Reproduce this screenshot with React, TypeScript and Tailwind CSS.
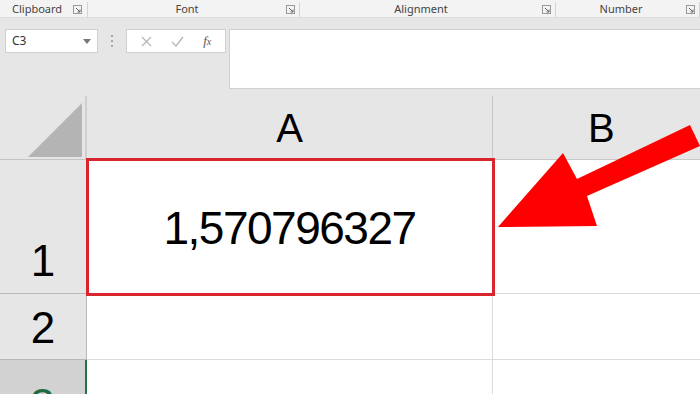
import React from "react";

function Launcher() {
  return (
    <svg width="9" height="9" viewBox="0 0 9 9" className="shrink-0">
      <rect x="0.5" y="0.5" width="8" height="8" fill="none" stroke="#9a9a9a" strokeWidth="1" />
      <path d="M3 3 L7 7 M7 4.5 L7 7 L4.5 7" stroke="#666" strokeWidth="1" fill="none" />
    </svg>
  );
}

function RibbonGroup({ label, width, pad }: { label: string; width: string; pad?: string }) {
  return (
    <div className={`${width} h-full flex items-center border-r border-[#d4d4d4] pr-[4px] ${pad ?? ""}`}>
      <div className="flex-1 text-center text-[11px] text-[#444]">{label}</div>
      <Launcher />
    </div>
  );
}

export default function App() {
  const font = { fontFamily: '"Noto Sans", "Open Sans", sans-serif' };
  return (
    <div className="w-[700px] h-[394px] overflow-hidden bg-[#e6e6e6] flex flex-col relative" style={font}>
      {/* ribbon group labels */}
      <div className="h-[18px] shrink-0 bg-[#f3f3f3] border-b border-[#dedede] flex items-stretch pt-[2px]">
        <div className="w-[88px] h-full flex items-center border-r border-[#d4d4d4] pr-[5px] pl-[12px]">
          <div className="flex-1 text-[11px] text-[#444]">Clipboard</div>
          <Launcher />
        </div>
        <RibbonGroup label="Font" width="w-[212px]" />
        <RibbonGroup label="Alignment" width="w-[256px]" />
        <RibbonGroup label="Number" width="w-[144px]" />
      </div>

      {/* formula bar area */}
      <div className="h-[78px] shrink-0 flex items-start pt-[11px] pl-[5px]">
        <div className="w-[93px] h-[24px] bg-white border border-[#d0d0d0] flex items-center pl-[6px] pr-[6px]">
          <span className="flex-1 text-[12px] text-[#333]">C3</span>
          <svg width="8" height="5" viewBox="0 0 8 5"><path d="M0 0 L8 0 L4 5 Z" fill="#777" /></svg>
        </div>
        <div className="w-[28px] h-[24px] flex flex-col items-center justify-center gap-[3px]">
          <div className="w-[2px] h-[2px] bg-[#a8a8a8]" />
          <div className="w-[2px] h-[2px] bg-[#a8a8a8]" />
          <div className="w-[2px] h-[2px] bg-[#a8a8a8]" />
        </div>
        <div className="w-[100px] h-[24px] bg-white border border-[#d0d0d0] flex items-center justify-around px-[4px]">
          <svg width="11" height="11" viewBox="0 0 11 11"><path d="M1 1 L10 10 M10 1 L1 10" stroke="#b8b8b8" strokeWidth="1.3" /></svg>
          <svg width="13" height="11" viewBox="0 0 13 11"><path d="M1 6 L5 10 L12 1" stroke="#b8b8b8" strokeWidth="1.4" fill="none" /></svg>
          <span className="text-[13px] italic text-[#555]" style={{ fontFamily: '"Liberation Serif", serif' }}>
            f<span className="text-[10px]">x</span>
          </span>
        </div>
        <div className="ml-[3px] flex-1 h-[60px] bg-white border border-[#d0d0d0] border-r-0" />
      </div>

      {/* grid */}
      <div className="flex-1 min-h-0 overflow-hidden grid grid-cols-[87px_406px_1fr] grid-rows-[64px_134px_66px_1fr]">
        {/* corner */}
        <div className="border-r-2 border-b border-[#d0d0d0] border-b-[#c4c4c4] relative">
          <svg className="absolute right-[2px] bottom-[1px]" width="56" height="56" viewBox="0 0 56 56">
            <polygon points="1,55 55,1 55,55" fill="#b4b4b4" />
          </svg>
        </div>
        <div className="border-r border-b border-[#c8c8c8] flex items-center justify-center text-[40px] text-black" style={{ fontFamily: '"Liberation Sans", sans-serif' }}>
          A
        </div>
        <div className="border-b border-[#c8c8c8] flex items-center pl-[95px] text-[40px] text-black" style={{ fontFamily: '"Liberation Sans", sans-serif' }}>
          B
        </div>

        {/* row 1 */}
        <div className="border-r border-b border-[#b8b8b8] flex items-end justify-center pb-[10px] text-[44px] text-black leading-none" style={{ fontFamily: '"Liberation Sans", sans-serif' }}>
          1
        </div>
        <div className="bg-white border-r border-b border-[#dadada] relative flex items-center justify-center">
          <div className="absolute -left-[1px] -top-[2px] -right-[3px] -bottom-[3px] border-[3px] border-[#d9252c]" />
          <span className="text-[46px] text-black tracking-[-1.5px] pt-[3px]" style={{ fontFamily: '"Liberation Sans", sans-serif' }}>
            1,570796327
          </span>
        </div>
        <div className="bg-white border-b border-[#dadada]" />

        {/* row 2 */}
        <div className="border-r border-b border-[#b8b8b8] flex items-center justify-center text-[44px] text-black leading-none pt-[2px]" style={{ fontFamily: '"Liberation Sans", sans-serif' }}>
          2
        </div>
        <div className="bg-white border-r border-b border-[#dadada]" />
        <div className="bg-white border-b border-[#dadada]" />

        {/* row 3 */}
        <div className="min-h-0 bg-[#d2d2d2] border-r-2 border-[#217346] flex items-start justify-center pt-[23px] text-[44px] text-[#1f6b44] leading-none overflow-hidden" style={{ fontFamily: '"Liberation Sans", sans-serif' }}>
          3
        </div>
        <div className="bg-white border-r border-[#dadada]" />
        <div className="bg-white" />
      </div>

      {/* red arrow annotation */}
      <svg className="absolute left-0 top-0 pointer-events-none" width="700" height="394" viewBox="0 0 700 394">
        <polygon points="498,227 563,153 577,179 690,125 700,146 587,196 597,226" fill="#ff0000" />
      </svg>
    </div>
  );
}
